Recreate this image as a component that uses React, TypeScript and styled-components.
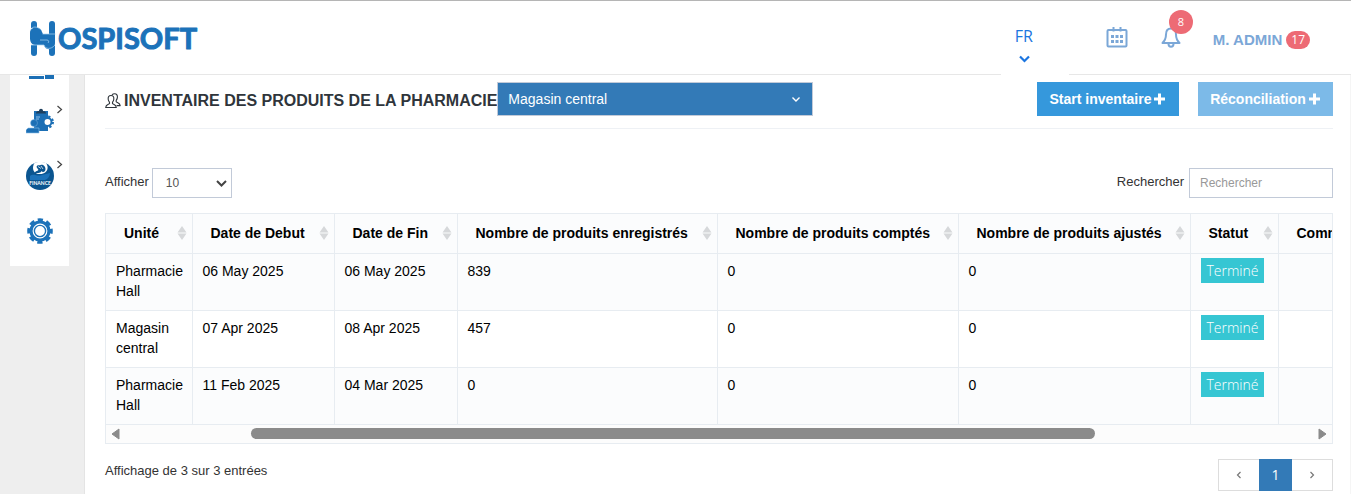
import React from "react";
import styled, { createGlobalStyle } from "styled-components";

const GlobalStyle = createGlobalStyle`
  *, *::before, *::after { box-sizing: border-box; }
  body {
    margin: 0;
    background: #fff;
    color: #333;
    font: 14px/20px "Liberation Sans", Arial, sans-serif;
  }
  button, input, select { font-family: inherit; border-radius: 0; }
`;

const Page = styled.div`
  display: flex;
  flex-direction: column;
  min-height: 100vh;
`;

/* ---------- top bar ---------- */

const TopBar = styled.header`
  display: flex;
  justify-content: space-between;
  height: 75px;
  padding: 0 41px 0 28px;
  border-top: 1px solid #b5b5b5;
  box-shadow: inset 0 -1px #e7e7e7;
`;

const LogoLink = styled.a`
  padding-top: 18px;
  height: 56px;
`;

const TopNav = styled.nav`
  display: flex;
  align-items: flex-start;
  color: #7ba7d7;
`;

const Language = styled.button`
  display: flex;
  flex-direction: column;
  align-items: flex-start;
  width: 68px;
  height: 74px;
  margin-right: 37px;
  padding: 24px 18px 0 14px;
  border: 0;
  background: #fff;
  color: #1b75e0;
  font: 16px/22px "Open Sans", sans-serif;

  svg { margin: 6px 0 0 4px; }
`;

const IconButton = styled.button<{ $gap: number }>`
  position: relative;
  margin: 25px ${(p) => p.$gap}px 0 0;
  padding: 0;
  border: 0;
  background: none;
  color: inherit;

  > svg { display: block; }
`;

const Count = styled.span`
  padding: 0 5px;
  border-radius: 9px;
  background: #ed6b75;
  color: #fff;
  font: 12px/18px "Open Sans", sans-serif;
`;

const BellCount = styled(Count)`
  position: absolute;
  left: 8px;
  top: -16px;
  width: 24px;
  border-radius: 12px;
  line-height: 24px;
  font-size: 11px;
  text-align: center;
`;

const UserLink = styled.a`
  display: flex;
  align-items: center;
  gap: 4px;
  margin-top: 29px;
  color: inherit;
  font-size: 15px;
  font-weight: bold;
  text-decoration: none;
`;

/* ---------- body ---------- */

const Body = styled.div`
  display: flex;
  flex: 1;
`;

const SideBar = styled.aside`
  flex: none;
  width: 85px;
  padding-left: 10px;
  border-right: 1px solid #e4e4e4;
  background: #eee;
`;

const SideMenu = styled.nav`
  width: 59px;
  padding-bottom: 8px;
  background: #fff;
`;

const SideItem = styled.a<{ $clipped?: boolean }>`
  display: flex;
  align-items: ${(p) => (p.$clipped ? "flex-start" : "center")};
  height: ${(p) => (p.$clipped ? 18 : 55)}px;
  padding-left: 16px;
  color: #444;
`;

const ItemArrow = styled.svg`
  align-self: flex-start;
  margin: 12px 0 0 2px;
`;

const Main = styled.main`
  flex: 1;
  min-width: 0;
  padding: 7px 17px 0 20px;
  border-right: 1px solid #f5f5f5;
`;

const TitleRow = styled.div`
  display: flex;
  align-items: flex-start;
  height: 47px;
  border-bottom: 1px solid #eef1f5;
`;

const Title = styled.h1`
  display: flex;
  align-items: center;
  gap: 3px;
  height: 37px;
  margin: 0;
  color: #2f353b;
  font-size: 16px;
  white-space: nowrap;
`;

const SelectBox = styled.span<{ $width: number }>`
  position: relative;
  display: inline-flex;
  width: ${(p) => p.$width}px;
`;

const SelectArrow = styled.svg<{ $right: number }>`
  position: absolute;
  right: ${(p) => p.$right}px;
  top: calc(50% - 5px);
  pointer-events: none;
`;

const StoreSelect = styled.select`
  appearance: none;
  width: 100%;
  height: 34px;
  padding: 0 10px;
  border: 1px solid #c2cad8;
  background: #337ab7;
  color: #fff;
  font-size: 14px;
`;

const Actions = styled.div`
  display: flex;
  gap: 19px;
  margin-left: auto;
`;

const Action = styled.button<{ $soft?: boolean }>`
  display: flex;
  align-items: center;
  justify-content: center;
  gap: 2px;
  width: ${(p) => (p.$soft ? 135 : 142)}px;
  height: 34px;
  padding: 0;
  border: 0;
  background: ${(p) => (p.$soft ? "#7cbae8" : "#3598dc")};
  color: #fff;
  font-size: 14px;
  font-weight: bold;
`;

const Filters = styled.div`
  display: flex;
  justify-content: space-between;
  padding: 39px 0 15px;
`;

const Field = styled.label<{ $gap: number }>`
  display: flex;
  gap: ${(p) => p.$gap}px;
  font-size: 13px;
  line-height: 28px;
`;

const SizeSelect = styled.select`
  appearance: none;
  width: 100%;
  height: 30px;
  padding: 0 13px;
  border: 1px solid #c2cad8;
  background: #fff;
  color: #555;
  font-size: 12px;
`;

const SearchInput = styled.input`
  width: 144px;
  height: 30px;
  padding: 0 10px;
  border: 1px solid #c2cad8;
  color: #555;
  font-size: 12px;

  &::placeholder { color: #999; }
`;

const TableFrame = styled.div`
  border: 1px solid #e7ecf1;
`;

const TableScroller = styled.div`
  overflow: hidden;
`;

const Table = styled.table`
  width: 1309px;
  border-collapse: collapse;
  table-layout: fixed;
  color: #000;
`;

const HeadCell = styled.th<{ $width: number }>`
  width: ${(p) => p.$width}px;
  height: 39px;
  padding: 0 5px 0 18px;
  border-right: 1px solid #e7ecf1;
  border-bottom: 1px solid #e7ecf1;
  background: #fbfcfd;
`;

const HeadInner = styled.span`
  display: flex;
  align-items: center;
  justify-content: space-between;
  text-align: left;
  white-space: nowrap;
`;

const Row = styled.tr`
  &:nth-child(odd) { background: #fbfcfd; }
`;

const Cell = styled.td`
  height: 57px;
  padding: 7px 10px;
  border-right: 1px solid #e7ecf1;
  border-bottom: 1px solid #e7ecf1;
  vertical-align: top;
`;

const Status = styled.span`
  padding: 3px 6px;
  background: #36c6d3;
  color: #fff;
  font-family: "Open Sans", sans-serif;
  font-weight: 300;
`;

const ScrollBar = styled.div`
  display: flex;
  align-items: center;
  height: 18px;
  padding: 0 5px;
  background: #fcfcfc;
`;

const ScrollTrack = styled.div`
  flex: 1;
  padding: 0 222px 0 130px;
`;

const ScrollThumb = styled.div`
  height: 11px;
  border-radius: 6px;
  background: #8b8b8b;
`;

const TableFooter = styled.div`
  display: flex;
  justify-content: space-between;
  padding-top: 15px;
  font-size: 13px;
  line-height: 24px;
`;

const Pager = styled.nav`
  display: flex;
`;

const PageButton = styled.button<{ $active?: boolean }>`
  display: flex;
  align-items: center;
  justify-content: center;
  width: ${(p) => (p.$active ? 33 : 41)}px;
  height: 32px;
  padding: 0;
  border: 1px solid ${(p) => (p.$active ? "#337ab7" : "#ddd")};
  background: ${(p) => (p.$active ? "#337ab7" : "#fff")};
  color: ${(p) => (p.$active ? "#fff" : "#777")};
  font: 14px/20px "Open Sans", sans-serif;

  &:first-child { border-right: 0; }
  &:last-child { border-left: 0; }
`;

/* ---------- drawings ---------- */

const Logo = () => (
  <svg width="172" height="40" viewBox="0 0 172 40" role="img" aria-label="Hospisoft">
    <g fill="#1c72b9">
      <path d="M3 9V5a3 3 0 0 1 6 0v4z" />
      <path d="M21 15V5a3 3 0 0 1 6 0v10z" />
      <path d="M3 26h6v8a3 3 0 0 1-6 0z" />
      <path d="M21 26h6v8a3 3 0 0 1-6 0z" />
      <path d="M2 20v-6c0-7 11-7 12-1l1 2h12v5z" />
      <path d="M2 19h25v5c0 8-10 8-11 2H7c-3 0-5-3-5-7z" />
    </g>
    <g fill="none" stroke="#a9d3f1" strokeWidth=".7">
      <path d="M2.500 10.500C4 7.500 9 7 12.500 10.500" />
      <path d="M14.500 15h13" />
      <path d="M3 26h13c1 4 7 5 11 0" />
      <path d="M12 21h7c2 0 2 2 1 3" />
    </g>
    <text
      x="30"
      y="30"
      fill="#1c72b9"
      stroke="#1c72b9"
      strokeWidth="1"
      strokeLinejoin="round"
      fontFamily="Lato, sans-serif"
      fontWeight="700"
      fontSize="29"
    >
      OSPISOFT
    </text>
  </svg>
);

const LanguageChevron = () => (
  <svg width="11" height="11" viewBox="0 0 11 11" fill="none" stroke="currentColor" strokeWidth="2.200" aria-hidden="true">
    <path d="M1 3.500L5.500 8 10 3.500" />
  </svg>
);

const CalendarIcon = () => (
  <svg width="22" height="22" viewBox="0 0 22 22" fill="none" stroke="currentColor" strokeWidth="2" aria-hidden="true">
    <rect x="1.500" y="4" width="19" height="16.500" rx="1" />
    <path d="M7.500 1v4.500M14.500 1v4.500" />
    <path
      d="M5 10.500h3M9.500 10.500h3M14 10.500h3M5 15.500h3M9.500 15.500h3M14 15.500h3"
      strokeWidth="3"
    />
  </svg>
);

const BellIcon = () => (
  <svg width="20" height="22" viewBox="0 0 20 22" fill="none" stroke="currentColor" strokeWidth="2" strokeLinejoin="round" aria-hidden="true">
    <path d="M10 2.500c-4 0-5 3-5 6 0 4-1.500 6.500-3.500 8.500h17c-2-2-3.500-4.500-3.500-8.500 0-3-1-6-5-6z" />
    <path d="M7.500 18c0 3.500 5 3.500 5 0" />
  </svg>
);

const UsersIcon = () => (
  <svg width="16" height="16" viewBox="0 0 16 16" fill="none" stroke="#2f353b" strokeWidth="1.100" strokeLinejoin="round" aria-hidden="true">
    <path d="M6 2.500c-2.300 0-3 1.600-2.800 3.700.1 1.400.8 2.300 1.300 3v1.300c-.5 1-3.700 1-3.800 4h10.600c-.1-3-3.300-3-3.800-4V9.200c.5-.7 1.200-1.600 1.300-3C9 4 8.300 2.500 6 2.500z" />
    <path d="M7 2c.7-.9 1.700-1.200 2.600-1.200 2.200 0 3 1.600 2.800 3.600-.1 1.400-.7 2.300-1.200 3v1.300c.5 1 3.800 1 4 3.900h-3.600" />
  </svg>
);

const PlusIcon = () => (
  <svg width="13" height="12" viewBox="0 0 13 12" fill="#fff" aria-hidden="true">
    <path d="M5.500 .5h2.500v4h4v3H8v4H5v-4H1v-3h4v-4z" />
  </svg>
);

const SortIcon = () => (
  <svg width="10" height="14" viewBox="0 0 10 14" fill="#d6d8da" aria-hidden="true">
    <path d="M5 0l4.500 6.500h-9zM5 14l4.500-6.500h-9z" />
  </svg>
);

const BaseIcon = () => (
  <svg width="28" height="5" viewBox="0 0 28 5" aria-hidden="true">
    <path d="M3 1h15v3H3zM19 0h9v4h-9z" fill="#1c6fb5" />
  </svg>
);

const StockIcon = () => (
  <svg width="28" height="26" viewBox="0 0 28 26" aria-hidden="true">
    <path d="M8 3h14v20H8z" fill="#1c6fb5" />
    <path d="M10 5.500c0-2.500 2-2 3-2.500 0-3 4-3 4 0 1 .5 3 0 3 2.500z" fill="#1d3f5e" />
    <path d="M10 9h4m-4 2h3" stroke="#8fc1ea" />
    <circle cx="8" cy="15" r="3.500" fill="#1c6fb5" stroke="#8fc1ea" strokeWidth=".4" />
    <path d="M2 20h11v5H0v-3z" fill="#1c6fb5" stroke="#8fc1ea" strokeWidth=".6" />
    <circle cx="21.500" cy="14" r="5.500" fill="none" stroke="#1c6fb5" strokeWidth="2" strokeDasharray="2.300 2.020" />
    <circle cx="21.500" cy="14" r="4" fill="#fff" stroke="#1c6fb5" strokeWidth="2" />
  </svg>
);

const FinanceIcon = () => (
  <svg width="28" height="28" viewBox="0 0 28 28" role="img" aria-label="Finance">
    <circle cx="14" cy="14" r="14" fill="#0b5590" />
    <path d="M8.500 1C5 7 8 12 14 12s10-5 6-11C16-.5 12-.5 8.500 1z" fill="#fff" />
    <path d="M10.500 5c1-3 3-1 4-2 3-1 5 2 5 4 0 3-3 4-4 2-1 3-5 1-7 3 0-3 3-3 4-4z" fill="#0b5590" />
    <path d="M12 4.500l3 2M15 4l2 3" stroke="#fff" strokeWidth=".7" />
    <path d="M4 14c4-3 7 1 12-1l8-2c0 3-2 6-5 7H4z" fill="#1c72b9" />
    <text x="14" y="23" textAnchor="middle" fill="#fff" fontFamily="Lato, sans-serif" fontWeight="700" fontSize="5">
      FINANCE
    </text>
  </svg>
);

const GearIcon = () => (
  <svg width="28" height="26" viewBox="0 0 28 26" fill="none" stroke="#1c72b9" aria-hidden="true">
    <circle cx="14" cy="13" r="11" strokeWidth="3.600" strokeDasharray="5.140 3.500" strokeDashoffset="2.570" />
    <circle cx="14" cy="13" r="9" strokeWidth="3.200" />
    <circle cx="14" cy="13" r="5.600" strokeWidth="1.400" />
  </svg>
);

const RightArrow = () => (
  <ItemArrow width="7" height="9" viewBox="0 0 7 9" fill="none" stroke="currentColor" strokeWidth="1.200" aria-hidden="true">
    <path d="M1.500 1l4 3.500-4 3.500" />
  </ItemArrow>
);

const ScrollArrow = ({ d }: { d: string }) => (
  <svg width="10" height="12" viewBox="0 0 10 12" fill="#8b8b8b" stroke="#8b8b8b" strokeLinejoin="round" aria-hidden="true">
    <path d={d} />
  </svg>
);

/* ---------- data ---------- */

const columns = [
  { label: "Unité", width: 86 },
  { label: "Date de Debut", width: 142 },
  { label: "Date de Fin", width: 123 },
  { label: "Nombre de produits enregistrés", width: 260 },
  { label: "Nombre de produits comptés", width: 241 },
  { label: "Nombre de produits ajustés", width: 232 },
  { label: "Statut", width: 88 },
  { label: "Commentaire", width: 137 },
];

const rows = [
  ["Pharmacie Hall", "06 May 2025", "06 May 2025", "839", "0", "0"],
  ["Magasin central", "07 Apr 2025", "08 Apr 2025", "457", "0", "0"],
  ["Pharmacie Hall", "11 Feb 2025", "04 Mar 2025", "0", "0", "0"],
];

export default function App() {
  return (
    <Page>
      <GlobalStyle />
      <TopBar>
        <LogoLink href="#">
          <Logo />
        </LogoLink>
        <TopNav>
          <Language>
            FR
            <LanguageChevron />
          </Language>
          <IconButton $gap={33} aria-label="Calendrier">
            <CalendarIcon />
          </IconButton>
          <IconButton $gap={32} aria-label="Notifications">
            <BellIcon />
            <BellCount>8</BellCount>
          </IconButton>
          <UserLink href="#">
            M. ADMIN <Count>17</Count>
          </UserLink>
        </TopNav>
      </TopBar>

      <Body>
        <SideBar>
          <SideMenu>
            <SideItem href="#" $clipped aria-label="Accueil">
              <BaseIcon />
            </SideItem>
            <SideItem href="#" aria-label="Stock">
              <StockIcon />
              <RightArrow />
            </SideItem>
            <SideItem href="#" aria-label="Finance">
              <FinanceIcon />
              <RightArrow />
            </SideItem>
            <SideItem href="#" aria-label="Paramètres">
              <GearIcon />
            </SideItem>
          </SideMenu>
        </SideBar>

        <Main>
          <TitleRow>
            <Title>
              <UsersIcon />
              INVENTAIRE DES PRODUITS DE LA PHARMACIE
            </Title>
            <SelectBox $width={316}>
              <StoreSelect aria-label="Magasin">
                <option>Magasin central</option>
              </StoreSelect>
              <SelectArrow $right={12} width="10" height="10" viewBox="0 0 10 10" fill="none" stroke="#fff" strokeWidth="1.400">
                <path d="M1.500 3.500L5 7l3.500-3.500" />
              </SelectArrow>
            </SelectBox>
            <Actions>
              <Action>
                Start inventaire <PlusIcon />
              </Action>
              <Action $soft>
                Réconciliation <PlusIcon />
              </Action>
            </Actions>
          </TitleRow>

          <Filters>
            <Field $gap={3}>
              Afficher
              <SelectBox $width={80}>
                <SizeSelect>
                  <option>10</option>
                </SizeSelect>
                <SelectArrow $right={5} width="11" height="11" viewBox="0 0 11 11" fill="none" stroke="#444" strokeWidth="2">
                  <path d="M1 3L5.500 7.500 10 3" />
                </SelectArrow>
              </SelectBox>
            </Field>
            <Field $gap={5}>
              Rechercher
              <SearchInput placeholder="Rechercher" />
            </Field>
          </Filters>

          <TableFrame>
            <TableScroller>
              <Table>
                <thead>
                  <tr>
                    {columns.map((c) => (
                      <HeadCell key={c.label} $width={c.width}>
                        <HeadInner>
                          {c.label}
                          <SortIcon />
                        </HeadInner>
                      </HeadCell>
                    ))}
                  </tr>
                </thead>
                <tbody>
                  {rows.map((r, i) => (
                    <Row key={i}>
                      {r.map((value, j) => (
                        <Cell key={j}>{value}</Cell>
                      ))}
                      <Cell>
                        <Status>Terminé</Status>
                      </Cell>
                      <Cell />
                    </Row>
                  ))}
                </tbody>
              </Table>
            </TableScroller>
            <ScrollBar>
              <ScrollArrow d="M1 6l7-5v10z" />
              <ScrollTrack>
                <ScrollThumb />
              </ScrollTrack>
              <ScrollArrow d="M9 6L2 1v10z" />
            </ScrollBar>
          </TableFrame>

          <TableFooter>
            Affichage de 3 sur 3 entrées
            <Pager aria-label="Pagination">
              <PageButton aria-label="Précédent">
                <svg width="6" height="8" viewBox="0 0 6 8" fill="none" stroke="currentColor" strokeWidth="1.200">
                  <path d="M4.500 1l-3 3 3 3" />
                </svg>
              </PageButton>
              <PageButton $active>1</PageButton>
              <PageButton aria-label="Suivant">
                <svg width="6" height="8" viewBox="0 0 6 8" fill="none" stroke="currentColor" strokeWidth="1.200">
                  <path d="M1.500 1l3 3-3 3" />
                </svg>
              </PageButton>
            </Pager>
          </TableFooter>
        </Main>
      </Body>
    </Page>
  );
}
